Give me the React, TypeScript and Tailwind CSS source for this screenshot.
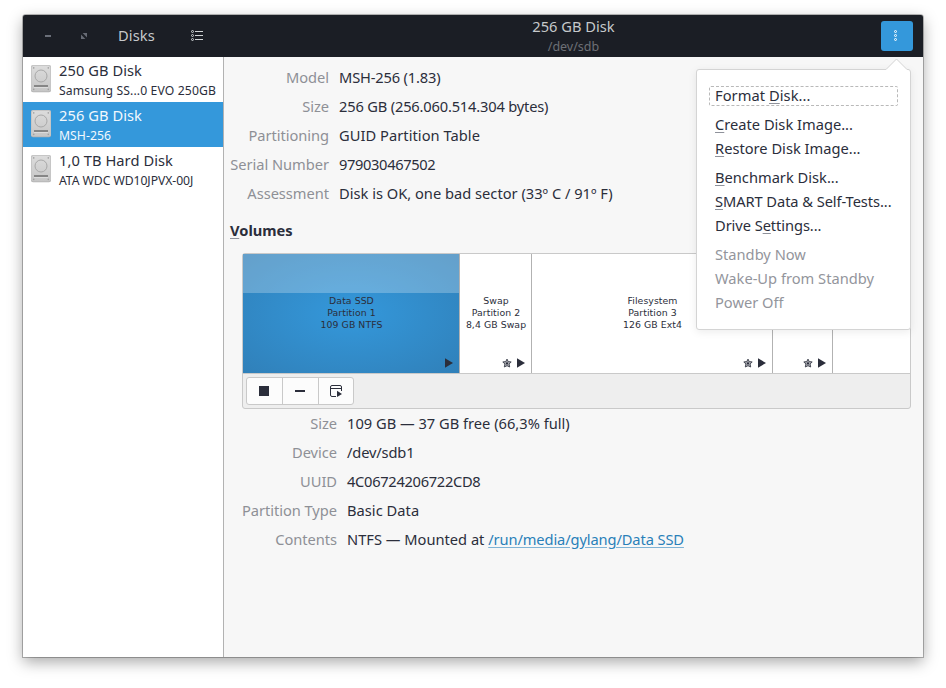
import type { ReactNode } from "react";

const DRIVES = [
  { name: "250 GB Disk", model: "Samsung SS...0 EVO 250GB", tracking: "tracking-[0.12px]", selected: false },
  { name: "256 GB Disk", model: "MSH-256", tracking: "tracking-[0.05px]", selected: true },
  { name: "1,0 TB Hard Disk", model: "ATA WDC WD10JPVX-00J", tracking: "tracking-[-0.06px]", selected: false },
];

const DRIVE_INFO = [
  { label: "Model", value: "MSH-256 (1.83)", tracking: "tracking-[-0.16px]" },
  { label: "Size", value: "256 GB (256.060.514.304 bytes)", tracking: "tracking-[-0.18px]" },
  { label: "Partitioning", value: "GUID Partition Table", tracking: "tracking-[0.04px]" },
  { label: "Serial Number", value: "979030467502", tracking: "tracking-[-0.36px]" },
  { label: "Assessment", value: "Disk is OK, one bad sector (33º C / 91º F)", tracking: "tracking-normal" },
];

const VOLUME_INFO = [
  { label: "Size", value: "109 GB — 37 GB free (66,3% full)", tracking: "tracking-normal" },
  { label: "Device", value: "/dev/sdb1", tracking: "tracking-[-0.15px]" },
  { label: "UUID", value: "4C06724206722CD8", tracking: "tracking-[-0.3px]" },
  { label: "Partition Type", value: "Basic Data", tracking: "tracking-[0.03px]" },
  {
    label: "Contents",
    value: "NTFS — Mounted at ",
    link: "/run/media/gylang/Data SSD",
    tracking: "tracking-normal",
  },
];

// "_" marks the mnemonic letter
const MENU = [
  [{ label: "Format _Disk...", focused: true }],
  [{ label: "_Create Disk Image..." }, { label: "_Restore Disk Image..." }],
  [
    { label: "_Benchmark Disk..." },
    { label: "_SMART Data & Self-Tests...", tight: true },
    { label: "Drive S_ettings...", tight: true },
  ],
  [
    { label: "Standby Now", disabled: true },
    { label: "Wake-Up from Standby", disabled: true },
    { label: "Power Off", disabled: true },
  ],
] as { label: string; focused?: boolean; disabled?: boolean; tight?: boolean }[][];

function Mnemonic({ text }: { text: string }) {
  const at = text.indexOf("_");
  if (at < 0) return <>{text}</>;
  return (
    <>
      {text.slice(0, at)}
      <span className="underline decoration-[#8f929b] decoration-1 underline-offset-[2px]">
        {text[at + 1]}
      </span>
      {text.slice(at + 2)}
    </>
  );
}

function DriveIcon() {
  return (
    <svg className="h-[28px] w-[20px] shrink-0" viewBox="0 0 20 28" fill="none">
      <defs>
        <linearGradient id="case" x1="0" y1="0" x2="0" y2="1">
          <stop offset="0" stopColor="#dcdcdc" />
          <stop offset="1" stopColor="#c6c6c6" />
        </linearGradient>
      </defs>
      <rect x="0" y="0.3" width="20" height="27" rx="2" fill="#b0b0b0" />
      <rect x="0" y="0" width="20" height="26.5" rx="2" fill="#c6c6c6" />
      <rect x="1" y="1" width="18" height="25" rx="1.5" fill="url(#case)" />
      <circle cx="10" cy="11" r="6" stroke="#a8a8a8" strokeWidth="1" />
      <rect x="3" y="20" width="14" height="2" fill="#868686" />
      <rect x="3" y="22" width="14" height="1" fill="#dcdcdc" />
      <circle cx="2.7" cy="2.9" r="0.8" fill="#a2a2a2" />
      <circle cx="17.3" cy="2.9" r="0.8" fill="#a2a2a2" />
      <circle cx="2.7" cy="24.4" r="0.8" fill="#a2a2a2" />
      <circle cx="17.3" cy="24.4" r="0.8" fill="#a2a2a2" />
    </svg>
  );
}

function StarIcon() {
  return (
    <svg className="h-[10px] w-[10px]" viewBox="0 0 10 10" fill="none">
      <path
        d="M5 1.1 6.2 3.6 9.2 3.9 7.1 6 7.7 9 5 7.7 2.3 9 2.9 6 .8 3.9 3.8 3.6Z"
        fill="#a4a6ac"
        stroke="#3b3e4b"
        strokeWidth="0.9"
      />
      <circle cx="5" cy="5.4" r="1.1" fill="#2b2e3b" />
    </svg>
  );
}

function PlayIcon() {
  return (
    <svg className="h-[10px] w-[8px]" viewBox="0 0 8 10">
      <path d="M0 .3 8 5 0 9.7Z" fill="#2b2e3b" />
    </svg>
  );
}

function Partition({
  className,
  lines,
  star,
  mounted,
}: {
  className: string;
  lines?: string[];
  star?: boolean;
  mounted?: boolean;
}) {
  return (
    <div className={`relative flex h-[119px] shrink-0 items-center justify-center ${className}`}>
      <div className="pb-[2px] pl-[1px] text-center font-['DejaVu_Sans'] text-[9.33px] leading-[12px] tracking-[0.06px] whitespace-nowrap text-[#2b2e3b]">
        {lines?.map((line) => (
          <div key={line}>{line}</div>
        ))}
      </div>
      <div className="absolute right-[6px] bottom-[5px] flex items-center gap-[5px]">
        {star && <StarIcon />}
        {mounted && <PlayIcon />}
      </div>
    </div>
  );
}

function InfoRow({
  label,
  labelClass,
  tracking,
  children,
}: {
  label: string;
  labelClass: string;
  tracking: string;
  children: ReactNode;
}) {
  return (
    <div className="flex h-[29px] items-center gap-[10px] whitespace-nowrap">
      <div className={`text-right tracking-[-0.04px] text-[#8e9096] ${labelClass}`}>{label}</div>
      <div className={tracking}>{children}</div>
    </div>
  );
}

function Header() {
  return (
    <header className="flex h-[42px] shrink-0 rounded-t-[2px] bg-[#1b1e25] text-[#c6c9cb]">
      <div className="flex w-[201px] items-center">
        <svg className="ml-[22px] h-[10px] w-[6px]" viewBox="0 0 6 10">
          <path d="M0 4h6v2H0z" fill="#6b6f79" />
        </svg>
        <svg className="ml-[30px] h-[6px] w-[6px]" viewBox="0 0 6 6">
          <path d="M1.6 0H6v4.4zM0 1.6 4.4 6H0z" fill="#666a74" />
        </svg>
        <span className="ml-[31px] w-[37px] pb-[2px] tracking-[0.1px] whitespace-nowrap">Disks</span>
        <svg className="ml-[36px] h-[12px] w-[13px]" viewBox="0 0 13 12" fill="none" stroke="#d0d3d5">
          <path d="M4 1.5h8M4 5.5h8M4 9.5h8" />
          <circle cx="1.5" cy="1.5" r="1" />
          <circle cx="1.5" cy="5.5" r="1" />
          <circle cx="1.5" cy="9.5" r="1" />
        </svg>
      </div>
      <div className="relative flex flex-1 flex-col items-center pt-[1px]">
        <div className="leading-[20px]">256 GB Disk</div>
        <div className="text-[12.5px] leading-[22px] text-[#6d7076]">/dev/sdb</div>
        <button
          type="button"
          aria-label="Drive menu"
          className="absolute top-[6px] right-[10px] flex h-[30px] w-[32px] items-center justify-center rounded-[3px] bg-[#3498db]"
        >
          <svg className="mr-[3px] h-[12px] w-[3px]" viewBox="0 0 3 12" fill="none" stroke="#fff">
            <circle cx="1.5" cy="1.5" r="1" />
            <circle cx="1.5" cy="5.5" r="1" />
            <circle cx="1.5" cy="9.5" r="1" />
          </svg>
        </button>
      </div>
    </header>
  );
}

function Sidebar() {
  return (
    <aside className="w-[201px] shrink-0 border-r border-[#b2b2b2] bg-white">
      {DRIVES.map((drive) => (
        <div
          key={drive.name}
          className={`flex h-[45px] gap-[8px] pl-[8px] whitespace-nowrap ${
            drive.selected ? "bg-[#3498db] text-[#f2f8fd]" : ""
          }`}
        >
          <div className="pt-[8px]">
            <DriveIcon />
          </div>
          <div className="pt-[3px]">
            <div className="leading-[20px] tracking-[0.06px]">{drive.name}</div>
            <div className={`text-[12.2px] leading-[22px] ${drive.tracking}`}>{drive.model}</div>
          </div>
        </div>
      ))}
    </aside>
  );
}

function Volumes() {
  return (
    <section className="mb-px ml-[18px] w-[669px] rounded-[3px] border border-[#c9c9c9] bg-[#eeeeee]">
      <div className="flex border-b border-[#c9c9c9] bg-white">
        <div className="relative shrink-0">
          <Partition
            className="w-[217px] border-r border-[#b2b2b2] bg-[radial-gradient(ellipse_farthest-corner_at_center,#3498db,#3080b9)]"
            lines={["Data SSD", "Partition 1", "109 GB NTFS"]}
            mounted
          />
          <div className="absolute top-0 left-0 h-[39px] w-[216px] bg-white/25" />
        </div>
        <Partition
          className="w-[72px] border-r border-[#b2b2b2]"
          lines={["Swap", "Partition 2", "8,4 GB Swap"]}
          star
          mounted
        />
        <Partition
          className="w-[241px] border-r border-[#b2b2b2]"
          lines={["Filesystem", "Partition 3", "126 GB Ext4"]}
          star
          mounted
        />
        <Partition className="w-[60px] border-r border-[#b2b2b2]" star mounted />
        <Partition className="w-[77px]" />
      </div>
      <div className="flex h-[34px] items-center pl-[3px]">
        <div className="flex h-[28px] w-[108px] divide-x divide-[#c9c9c9] rounded-[3px] border border-[#c9c9c9] bg-[#fcfcfc]">
          <button type="button" aria-label="Unmount" className="flex w-[36px] items-center justify-center pr-px">
            <svg className="h-[10px] w-[10px]" viewBox="0 0 10 10">
              <path d="M0 0h10v10H0z" fill="#2b2e3b" />
            </svg>
          </button>
          <button type="button" aria-label="Delete partition" className="flex w-[36px] items-center justify-center pr-px">
            <svg className="h-[10px] w-[10px]" viewBox="0 0 10 10">
              <path d="M0 4h10v2H0z" fill="#2b2e3b" />
            </svg>
          </button>
          <button type="button" aria-label="More actions" className="flex flex-1 items-center justify-center">
            <svg className="h-[12px] w-[13px]" viewBox="0 0 13 12" fill="none">
              <path d="M6 11.5H2A1.5 1.5 0 0 1 .5 10V2A1.5 1.5 0 0 1 2 .5H10A1.5 1.5 0 0 1 11.5 2V6M.5 3.5h11" stroke="#2b2e3b" />
              <path d="M7 5.8 12 9 7 12Z" fill="#2b2e3b" />
            </svg>
          </button>
        </div>
      </div>
    </section>
  );
}

function DriveMenu() {
  return (
    <div className="absolute top-[54px] right-[12px] w-[215px] rounded-[3px] border border-[#d4d4d4] bg-white pt-[14px] pb-[14px] shadow-[0_2px_8px_rgba(0,0,0,0.08)]">
      <svg className="absolute -top-[12px] right-[1px] h-[13px] w-[24px]" viewBox="0 0 24 13">
        <path d="M0 13 1 11.5 11.5 1 22 11.5 24 13Z" fill="#fff" />
        <path d="M0 11.5H1L11.5 1 22 11.5H24" fill="none" stroke="#d4d4d4" />
      </svg>
      {MENU.map((group) => (
        <div key={group[0].label} className="mb-[5px] last:mb-0">
          {group.map((item) => (
            <div key={item.label} className="flex h-[24px] items-center px-[12px]">
              <div
                className={`h-[20px] w-full rounded-[2px] border pl-[5px] leading-[16px] whitespace-nowrap ${
                  item.focused ? "border-dashed border-[#b9b9b9] tracking-[0.06px]" : "border-transparent"
                } ${item.disabled ? "text-[#93959c]" : ""} ${item.tight ? "tracking-[-0.07px]" : ""}`}
              >
                <Mnemonic text={item.label} />
              </div>
            </div>
          ))}
        </div>
      ))}
    </div>
  );
}

export default function App() {
  return (
    <div className="h-[688px] w-[946px] overflow-hidden bg-white px-[23px] pt-[15px] font-['Noto_Sans',sans-serif] text-[14.67px] text-[#2b2e3b]">
      <div className="relative flex h-[642px] w-[900px] flex-col rounded-t-[3px] bg-[#f7f7f7] shadow-[0_0_0_1px_rgba(0,0,0,0.26),0_5px_15px_rgba(0,0,0,0.35)]">
        <Header />
        <div className="flex min-h-0 flex-1">
          <Sidebar />
          <main className="flex-1 pt-[5px]">
            {DRIVE_INFO.map((row) => (
              <InfoRow key={row.label} label={row.label} labelClass="w-[105px]" tracking={row.tracking}>
                {row.value}
              </InfoRow>
            ))}
            <h2 className="flex h-[46px] items-center pb-px pl-[6px] font-bold">
              <span>
                <Mnemonic text="_Volumes" />
              </span>
            </h2>
            <Volumes />
            <div className="-mt-[2px]">
              {VOLUME_INFO.map((row) => (
                <InfoRow key={row.label} label={row.label} labelClass="w-[113px]" tracking={row.tracking}>
                  {row.value}
                  {row.link && (
                    <a className="tracking-[-0.11px] text-[#2980b9] underline decoration-[#7fb3d5] underline-offset-2">
                      {row.link}
                    </a>
                  )}
                </InfoRow>
              ))}
            </div>
          </main>
        </div>
        <DriveMenu />
      </div>
    </div>
  );
}
